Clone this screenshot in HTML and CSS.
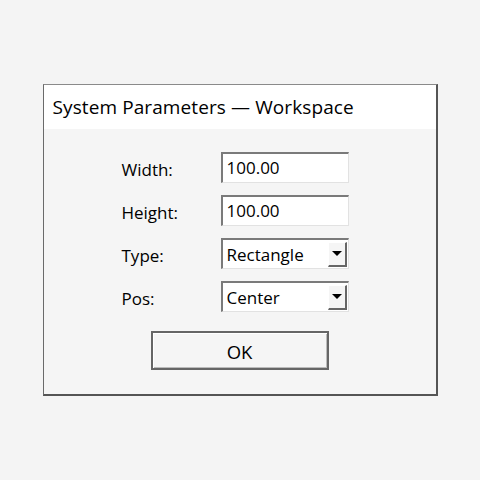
FILE: index.html
```html
<!DOCTYPE html>
<html>
<head>
<meta charset="utf-8">
<link rel="stylesheet" href="styles.css">
</head>
<body>
<div class="dialog">
  <div class="title">System Parameters — Workspace</div>
  <div class="content">
    <div class="form">
      <label class="label">Width:</label>
      <div class="field">100.00</div>
      <label class="label">Height:</label>
      <div class="field">100.00</div>
      <label class="label">Type:</label>
      <div class="field select"><span>Rectangle</span><span class="drop"><span class="arrow"></span></span></div>
      <label class="label">Pos:</label>
      <div class="field select"><span>Center</span><span class="drop"><span class="arrow"></span></span></div>
    </div>
    <div class="actions">
      <div class="btn">OK</div>
    </div>
  </div>
</div>
</body>
</html>
```
FILE: styles.css
```css
html, body {
  margin: 0;
  padding: 0;
}
body {
  width: 480px;
  height: 480px;
  background: #f4f4f4;
  display: flex;
  align-items: center;
  justify-content: center;
  font-family: "Open Sans", "Noto Sans", sans-serif;
  color: #000;
}
.dialog {
  width: 392px;
  height: 309px;
  border-top: 1px solid #8a8a8a;
  border-left: 1px solid #6a6a6a;
  border-right: 2px solid #555;
  border-bottom: 2px solid #555;
  background: #f5f5f5;
  display: flex;
  flex-direction: column;
  margin-top: -1px;
}
.title {
  background: #fff;
  height: 44px;
  box-sizing: border-box;
  padding: 10px 0 0 9px;
  font-size: 19px;
  line-height: 25px;
  letter-spacing: 0.1px;
}
.content {
  flex: 1;
  display: flex;
  flex-direction: column;
  padding-top: 23px;
}
.form {
  display: grid;
  grid-template-columns: 99px 128px;
  grid-auto-rows: 31px;
  row-gap: 12.3px;
  margin-left: 78px;
}
.label {
  font-size: 17px;
  display: flex;
  align-items: center;
  padding-top: 4px;
}
.field {
  box-sizing: border-box;
  background: #fff;
  border-top: 2px solid #7a7a7a;
  border-left: 2px solid #7a7a7a;
  border-right: 1px solid #e2e2e2;
  border-bottom: 1px solid #e2e2e2;
  font-size: 17px;
  padding-left: 4px;
  display: flex;
  align-items: center;
  line-height: 20px;
}
.select {
  justify-content: space-between;
  padding-right: 1px;
  padding-top: 1px;
}
.select .drop {
  margin-top: -1px;
}
.drop {
  width: 19px;
  height: 25px;
  box-sizing: border-box;
  background: #f5f5f5;
  border-top: 1px solid #fff;
  border-left: 1px solid #fff;
  border-right: 2px solid #666;
  border-bottom: 2px solid #666;
  display: flex;
  align-items: center;
  justify-content: center;
}
.arrow {
  width: 0;
  height: 0;
  border-left: 5px solid transparent;
  border-right: 5px solid transparent;
  border-top: 5px solid #000;
}
.actions {
  display: flex;
  justify-content: center;
  margin-top: 19px;
}
.btn {
  width: 178px;
  height: 39px;
  box-sizing: border-box;
  border: 2px solid #666;
  box-shadow: inset 1px 1px 0 #fff, inset -1px -1px 0 #bbb;
  background: #f5f5f5;
  display: flex;
  align-items: center;
  justify-content: center;
  font-size: 18.5px;
  padding-top: 2px;
}
```
